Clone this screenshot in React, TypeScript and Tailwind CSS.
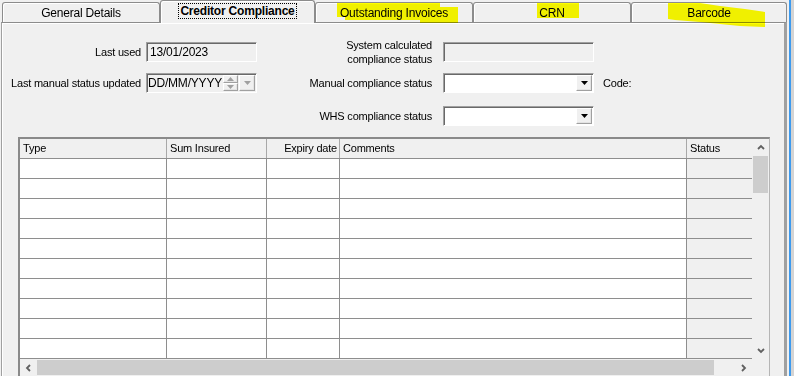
import type { ReactNode } from "react";

const sunken =
    "border border-t-[#a0a0a0] border-l-[#a0a0a0] border-r-white border-b-white shadow-[inset_1px_1px_0_#696969]";
const raised =
    "bg-[#f0f0f0] border border-t-white border-l-white border-r-[#a0a0a0] border-b-[#a0a0a0] shadow-[inset_-1px_-1px_0_#e3e3e3]";

function Chevron({ dir, className = "" }: { dir: "up" | "down" | "left" | "right"; className?: string }) {
    const d = {
        up: "M1 5 L4 2 L7 5",
        down: "M1 2 L4 5 L7 2",
        left: "M5 1 L2 4 L5 7",
        right: "M2 1 L5 4 L2 7",
    }[dir];
    return (
        <svg width="8" height="8" viewBox="0 0 8 8" className={className}>
            <path d={d} fill="none" stroke="#606060" strokeWidth="1.8" />
        </svg>
    );
}

function DropButton({ disabled = false }: { disabled?: boolean }) {
    return (
        <div className={`w-[16px] h-[16px] flex items-center justify-center ${raised}`}>
            <svg width="7" height="4" viewBox="0 0 7 4">
                <path d="M0 0 H7 L3.5 4 Z" fill={disabled ? "#a0a0a0" : "#000"} />
            </svg>
        </div>
    );
}

function Combo() {
    return (
        <div className={`w-[151px] h-[20px] bg-white flex items-center justify-end pr-[1px] ${sunken}`}>
            <DropButton />
        </div>
    );
}

function Tab({ children, w, active = false }: { children: ReactNode; w: number; active?: boolean }) {
    return (
        <div
            style={{ width: w }}
            className={
                active
                    ? "relative z-10 -mb-[1px] h-[23px] flex items-center justify-center bg-[#f0f0f0] border border-b-0 border-[#8c8c8c] rounded-t-[3px] shadow-[inset_1px_1px_0_#fff]"
                    : "h-[20px] flex items-center justify-center bg-[#f0f0f0] border border-b-0 border-[#8c8c8c] rounded-t-[3px] shadow-[inset_1px_1px_0_#fff]"
            }
        >
            {children}
        </div>
    );
}

const columns = [
    { label: "Type", w: 147 },
    { label: "Sum Insured", w: 100 },
    { label: "Expiry date", w: 73, right: true },
    { label: "Comments", w: 347 },
    { label: "Status", w: 65, last: true },
];

const rows = Array.from({ length: 10 }, (_, i) => i);

export default function App() {
    return (
        <div className="relative w-[794px] h-[376px] overflow-hidden flex bg-[#f0f0f0] text-[11px] leading-none tracking-[-0.2px] text-black font-['Liberation_Sans',Arial,sans-serif]">
            <div className="w-[789px] flex flex-col">
                {/* tabs */}
                <div className="h-[22px] flex items-end pl-[2px] text-[12px]">
                    <Tab w={158}>General Details</Tab>
                    <Tab w={155} active>
                        <span className="font-bold border border-dotted border-black px-[1px] py-[1px] -mt-[2px]">
                            Creditor Compliance
                        </span>
                    </Tab>
                    <Tab w={158}>Outstanding Invoices</Tab>
                    <Tab w={158}>CRN</Tab>
                    <Tab w={156}>Barcode</Tab>
                </div>

                {/* panel */}
                <div className="ml-[1px] w-[786px] flex-1 border-t border-t-[#8c8c8c] border-l border-l-[#a0a0a0] border-r-[3px] border-r-[#a0a0a0] shadow-[inset_1px_1px_0_#fff] pt-[19px]">
                    {/* row 1 */}
                    <div className="flex h-[20px]">
                        <div className="w-[255px] flex items-center justify-end">
                            <span className="mr-[5px]">Last used</span>
                            <div className={`w-[111px] h-[20px] flex items-center pl-[3px] text-[12px] ${sunken}`}>
                                13/01/2023
                            </div>
                        </div>
                        <div className="w-[337px] flex items-center justify-end">
                            <span className="mr-[11px] text-right leading-[14px]">
                                System calculated
                                <br />
                                compliance status
                            </span>
                            <div className={`w-[151px] h-[20px] ${sunken}`} />
                        </div>
                    </div>

                    {/* row 2 */}
                    <div className="flex h-[20px] mt-[11px]">
                        <div className="w-[255px] flex items-center justify-end">
                            <span className="mr-[5px]">Last manual status updated</span>
                            <div className={`w-[111px] h-[20px] flex items-center pl-[1px] pr-[1px] text-[12px] ${sunken}`}>
                                <span className="flex-1">DD/MM/YYYY</span>
                                <div className="flex flex-col w-[15px] h-[16px]">
                                    <div className={`flex-1 flex items-center justify-center ${raised}`}>
                                        <svg width="7" height="4" viewBox="0 0 7 4">
                                            <path d="M0 4 H7 L3.5 0 Z" fill="#a0a0a0" />
                                        </svg>
                                    </div>
                                    <div className={`flex-1 flex items-center justify-center ${raised}`}>
                                        <svg width="7" height="4" viewBox="0 0 7 4">
                                            <path d="M0 0 H7 L3.5 4 Z" fill="#a0a0a0" />
                                        </svg>
                                    </div>
                                </div>
                                <div className="ml-[1px]">
                                    <DropButton disabled />
                                </div>
                            </div>
                        </div>
                        <div className="w-[337px] flex items-center justify-end">
                            <span className="mr-[11px]">Manual compliance status</span>
                            <Combo />
                        </div>
                        <span className="ml-[9px] self-center">Code:</span>
                    </div>

                    {/* row 3 */}
                    <div className="flex h-[20px] mt-[13px]">
                        <div className="w-[255px]" />
                        <div className="w-[337px] flex items-center justify-end">
                            <span className="mr-[11px]">WHS compliance status</span>
                            <Combo />
                        </div>
                    </div>

                    {/* grid */}
                    <div className="ml-[16px] mt-[11px] w-[752px] bg-white border-t-2 border-l-2 border-r border-t-[#8a8a8a] border-l-[#8a8a8a] border-r-[#b5b5b5]">
                        <div className="flex">
                            <div className="w-[732px]">
                                <div className="flex h-[20px] bg-[#f0f0f0] border-b border-[#8e8e8e]">
                                    {columns.map((c) => (
                                        <div
                                            key={c.label}
                                            style={{ width: c.w }}
                                            className={`flex items-center ${c.last ? "" : "border-r border-[#a8a8a8]"} ${
                                                c.right ? "justify-end pr-[2px]" : "pl-[3px]"
                                            }`}
                                        >
                                            {c.label}
                                        </div>
                                    ))}
                                </div>
                                {rows.map((r) => (
                                    <div key={r} className="flex h-[20px] border-b border-[#8e8e8e]">
                                        {columns.map((c) => (
                                            <div
                                                key={c.label}
                                                style={{ width: c.w }}
                                                className={c.last ? "bg-[#f0f0f0]" : "bg-white border-r border-[#8e8e8e]"}
                                            />
                                        ))}
                                    </div>
                                ))}
                            </div>
                            <div className="w-[17px] bg-[#f0f0f0] flex flex-col">
                                <div className="h-[17px] flex items-center justify-center">
                                    <Chevron dir="up" />
                                </div>
                                <div className="mx-[1px] h-[37px] bg-[#cdcdcd]" />
                                <div className="flex-1" />
                                <div className="h-[17px] flex items-center justify-center">
                                    <Chevron dir="down" />
                                </div>
                            </div>
                        </div>
                        <div className="flex h-[17px] bg-[#f0f0f0]">
                            <div className="w-[732px] flex items-center">
                                <div className="w-[17px] flex items-center justify-center">
                                    <Chevron dir="left" />
                                </div>
                                <div className="w-[677px] h-[15px] bg-[#cdcdcd]" />
                                <div className="flex-1" />
                                <div className="w-[17px] flex items-center justify-center">
                                    <Chevron dir="right" />
                                </div>
                            </div>
                            <div className="w-[17px]" />
                        </div>
                    </div>
                </div>
            </div>
            <div className="w-[2px] bg-[#3c9aee]" />
            <div className="w-[3px] bg-[#d4d4d4]" />

            {/* marker highlights over the tab captions */}
            <svg
                width="794"
                height="30"
                className="absolute left-0 top-0 pointer-events-none mix-blend-multiply"
            >
                <g fill="#ffff00">
                    <polygon points="177,4 300,4 300,3 311,3 311,23 300,23 300,20 177,20" />
                    <polygon points="337,3 440,3 440,7 458,7 458,23 420,23 420,20 345,20 345,17 337,17" />
                    <polygon points="537,3 579,3 579,18 537,18" />
                    <polygon points="668,3 700,3 720,6 745,9 765,12 765,27 740,26 700,22 675,20 668,19" />
                </g>
            </svg>
        </div>
    );
}
